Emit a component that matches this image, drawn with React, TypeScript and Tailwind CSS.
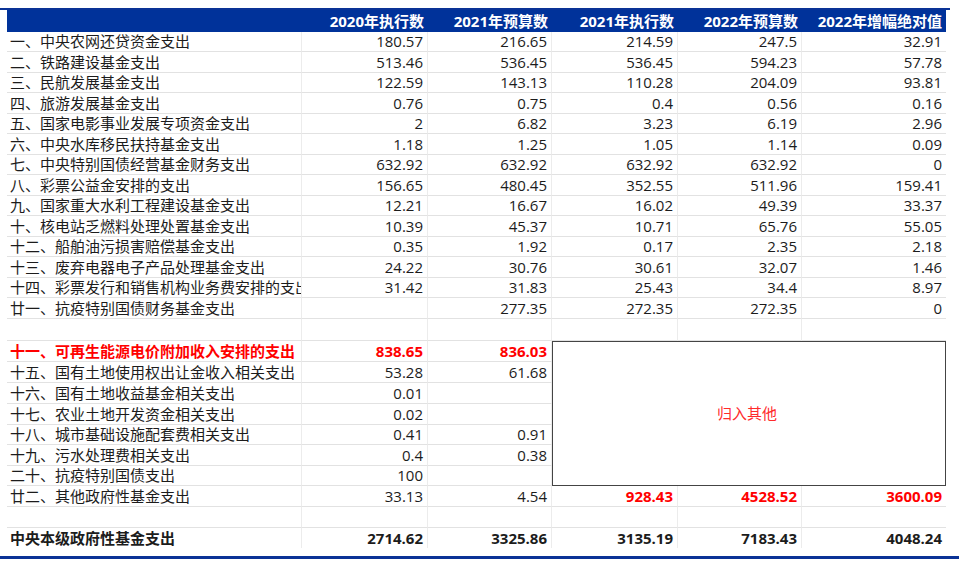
import React from 'react';

type Row = {
    label: string;
    vals: string[];
    kind?: 'red' | 'total' | 'empty' | 'boxStart' | 'boxed';
    redFrom?: number;
};

const rows: Row[] = [
    { label: '一、中央农网还贷资金支出', vals: ['180.57', '216.65', '214.59', '247.5', '32.91'] },
    { label: '二、铁路建设基金支出', vals: ['513.46', '536.45', '536.45', '594.23', '57.78'] },
    { label: '三、民航发展基金支出', vals: ['122.59', '143.13', '110.28', '204.09', '93.81'] },
    { label: '四、旅游发展基金支出', vals: ['0.76', '0.75', '0.4', '0.56', '0.16'] },
    { label: '五、国家电影事业发展专项资金支出', vals: ['2', '6.82', '3.23', '6.19', '2.96'] },
    { label: '六、中央水库移民扶持基金支出', vals: ['1.18', '1.25', '1.05', '1.14', '0.09'] },
    { label: '七、中央特别国债经营基金财务支出', vals: ['632.92', '632.92', '632.92', '632.92', '0'] },
    { label: '八、彩票公益金安排的支出', vals: ['156.65', '480.45', '352.55', '511.96', '159.41'] },
    { label: '九、国家重大水利工程建设基金支出', vals: ['12.21', '16.67', '16.02', '49.39', '33.37'] },
    { label: '十、核电站乏燃料处理处置基金支出', vals: ['10.39', '45.37', '10.71', '65.76', '55.05'] },
    { label: '十二、船舶油污损害赔偿基金支出', vals: ['0.35', '1.92', '0.17', '2.35', '2.18'] },
    { label: '十三、废弃电器电子产品处理基金支出', vals: ['24.22', '30.76', '30.61', '32.07', '1.46'] },
    { label: '十四、彩票发行和销售机构业务费安排的支出', vals: ['31.42', '31.83', '25.43', '34.4', '8.97'] },
    { label: '廿一、抗疫特别国债财务基金支出', vals: ['', '277.35', '272.35', '272.35', '0'] },
    { label: '', vals: ['', '', '', '', ''], kind: 'empty' },
    { label: '十一、可再生能源电价附加收入安排的支出', vals: ['838.65', '836.03'], kind: 'boxStart' },
    { label: '十五、国有土地使用权出让金收入相关支出', vals: ['53.28', '61.68'], kind: 'boxed' },
    { label: '十六、国有土地收益基金相关支出', vals: ['0.01', ''], kind: 'boxed' },
    { label: '十七、农业土地开发资金相关支出', vals: ['0.02', ''], kind: 'boxed' },
    { label: '十八、城市基础设施配套费相关支出', vals: ['0.41', '0.91'], kind: 'boxed' },
    { label: '十九、污水处理费相关支出', vals: ['0.4', '0.38'], kind: 'boxed' },
    { label: '二十、抗疫特别国债支出', vals: ['100', ''], kind: 'boxed' },
    { label: '廿二、其他政府性基金支出', vals: ['33.13', '4.54', '928.43', '4528.52', '3600.09'], redFrom: 2 },
    { label: '', vals: ['', '', '', '', ''], kind: 'empty' },
    { label: '中央本级政府性基金支出', vals: ['2714.62', '3325.86', '3135.19', '7183.43', '4048.24'], kind: 'total' },
];

const headers = ['2020年执行数', '2021年预算数', '2021年执行数', '2022年预算数', '2022年增幅绝对值'];

const App: React.FC = () => {
    return (
        <div className="w-[959px] h-[563px] bg-white overflow-hidden font-['Open_Sans','Noto_Sans_CJK_SC',sans-serif] text-[15px] text-[#1c1c1c]">
            <div className="h-[8px]" />
            <div className="h-[2px] w-[950px] bg-[#0a3296]" />
            <div className="ml-[7px] grid grid-cols-[295px_126px_124px_126px_124px_144px] grid-rows-[22px_20px_21px_20px_21px_20px_21px_20px_21px_20px_21px_20px_21px_20px_21px_22px_21px_21px_21px_21px_20px_21px_20px_21px_21px_20px]">
                {/* header */}
                <div className="bg-[#00329a]" />
                {headers.map((h) => (
                    <div key={h} className="bg-[#00329a] flex items-center justify-end pr-[4px] font-bold text-white whitespace-nowrap">
                        {h}
                    </div>
                ))}

                {rows.map((r, i) => {
                    const isTotal = r.kind === 'total';
                    const isRed = r.kind === 'boxStart';
                    const line = isTotal ? '' : 'border-b border-[#e2e2e2]';
                    return (
                        <React.Fragment key={i}>
                            <div className={`${line} border-r border-r-[#ececec] flex items-center pl-[3px] overflow-hidden whitespace-nowrap ${isRed ? 'font-bold text-[#ff0000]' : ''} ${isTotal ? 'font-bold' : ''}`}>
                                {r.label}
                            </div>
                            {r.vals.map((v, j) => {
                                const red = isRed || (r.redFrom !== undefined && j >= r.redFrom);
                                return (
                                    <div
                                        key={j}
                                        className={`${line} ${j < 4 ? 'border-r border-r-[#ececec]' : ''} flex items-center justify-end pr-[4px] whitespace-nowrap ${red ? 'font-bold text-[#ff0000]' : ''} ${isTotal ? 'font-bold' : ''}`}
                                    >
                                        {v}
                                    </div>
                                );
                            })}
                            {r.kind === 'boxStart' && (
                                <div className="col-span-3 row-span-7 border border-[#444] bg-white flex items-center justify-center pr-[4px] text-[#ff2b2b]">
                                    归入其他
                                </div>
                            )}
                        </React.Fragment>
                    );
                })}
            </div>
            <div className="h-[8px]" />
            <div className="h-[3px] w-[959px] bg-[#0a3296]" />
        </div>
    );
};

export default App;
